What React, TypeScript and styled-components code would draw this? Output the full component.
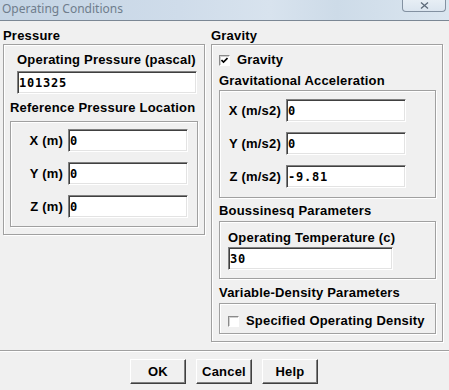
import styled, { createGlobalStyle } from 'styled-components'

const GlobalStyle = createGlobalStyle`
    html, body {
        margin: 0;
        padding: 0;
        background: #f0f0f0;
    }
    * {
        box-sizing: border-box;
    }
`

const Window = styled.div`
    width: 449px;
    height: 390px;
    overflow: hidden;
    display: flex;
    flex-direction: column;
    background: #f0f0f0;
    font-family: 'Liberation Sans', Arial, sans-serif;
    font-size: 13px;
    font-weight: bold;
    letter-spacing: 0.2px;
    color: #000;
`

const TitleBar = styled.div`
    height: 21px;
    flex: none;
    display: flex;
    justify-content: space-between;
    align-items: flex-start;
    padding-left: 2px;
    border-bottom: 1px solid #7b8794;
    background: linear-gradient(
        90deg,
        #c4d4e4 0%,
        #cfdcea 40%,
        #d8e3ee 60%,
        #cddbe8 75%,
        #dbe6f0 100%
    );
`

const Title = styled.span`
    font-family: 'Noto Sans', 'Open Sans', sans-serif;
    font-weight: normal;
    font-size: 12px;
    letter-spacing: 0;
    line-height: 18px;
    color: #6f7d8c;
`

const CloseBox = styled.div`
    width: 44px;
    height: 12px;
    margin-right: 3px;
    display: flex;
    align-items: center;
    justify-content: center;
    border: 1px solid #8391a1;
    border-top: none;
    border-radius: 0 0 4px 4px;
    background: linear-gradient(#e7eef5, #dbe5ef);
`

const Body = styled.div`
    display: flex;
    align-items: flex-start;
    gap: 6px;
    padding-left: 3px;
`

const Column = styled.div<{ $width: number }>`
    width: ${({ $width }) => $width}px;
    display: flex;
    flex-direction: column;
`

const GroupTitle = styled.div`
    line-height: 16px;
    padding-top: 7px;
`

const Frame = styled.div<{ $pad: string }>`
    display: flex;
    flex-direction: column;
    padding: ${({ $pad }) => $pad};
    border: 1px solid #a0a0a0;
    box-shadow: inset 1px 1px 0 #fff, 1px 1px 0 #fff;
`

const SubTitle = styled.div<{ $top: number; $bottom: number }>`
    line-height: 16px;
    margin-top: ${({ $top }) => $top}px;
    margin-bottom: ${({ $bottom }) => $bottom}px;
    white-space: nowrap;
`

const FieldLabel = styled.div<{ $indent: number }>`
    line-height: 16px;
    padding-left: ${({ $indent }) => $indent}px;
    white-space: nowrap;
`

const TextBox = styled.input<{ $width: number; $indent?: number }>`
    width: ${({ $width }) => $width}px;
    height: 23px;
    margin: 0 0 0 ${({ $indent }) => $indent ?? 0}px;
    padding: 1px 2px 0 1px;
    border-style: solid;
    border-width: 1px;
    border-color: #808080 #fff #fff #808080;
    box-shadow: inset 1px 1px 0 #404040, inset -1px -1px 0 #e3e3e3;
    background: #fff;
    font-family: 'DejaVu Sans Mono', 'Liberation Mono', monospace;
    font-weight: bold;
    font-size: 12px;
    letter-spacing: 0.8px;
    color: #000;
    outline: none;
`

const Rows = styled.div`
    display: flex;
    flex-direction: column;
    gap: 10px;
`

const Row = styled.div`
    display: flex;
    align-items: center;
    gap: 5px;
`

const RowLabel = styled.span<{ $width: number }>`
    width: ${({ $width }) => $width}px;
    text-align: right;
    white-space: nowrap;
`

const CheckRow = styled.label<{ $indent: number }>`
    display: flex;
    align-items: center;
    gap: 7px;
    line-height: 16px;
    padding-left: ${({ $indent }) => $indent}px;
`

const CheckBox = styled.span`
    width: 11px;
    height: 11px;
    display: flex;
    align-items: center;
    justify-content: center;
    border-style: solid;
    border-width: 1px;
    border-color: #8a8a8a #fff #fff #8a8a8a;
    box-shadow: inset 1px 1px 0 #d0d0d0;
    background: #fff;
`

const Footer = styled.div`
    margin-top: 8px;
    border-top: 1px solid #a0a0a0;
    border-bottom: 1px solid #fff;
`

const ButtonRow = styled.div`
    display: flex;
    justify-content: center;
    gap: 10px;
    margin-top: 7px;
    padding-right: 1px;
`

const Button = styled.button`
    width: 56px;
    height: 25px;
    padding: 0;
    border-style: solid;
    border-width: 1px;
    border-color: #fff #404040 #404040 #fff;
    box-shadow: inset -1px -1px 0 #808080;
    background: #f0f0f0;
    font-family: 'Liberation Sans', Arial, sans-serif;
    font-weight: bold;
    font-size: 13px;
    letter-spacing: 0.2px;
    color: #000;
`

const Check = ({ checked }: { checked: boolean }) => (
    <CheckBox>
        {checked && (
            <svg width="7" height="7" viewBox="0 0 7 7">
                <path d="M0.5 3 L2.5 5 L6.5 1" stroke="#000" strokeWidth="1.6" fill="none" />
            </svg>
        )}
    </CheckBox>
)

const pressureRows = ['X (m)', 'Y (m)', 'Z (m)']
const gravityRows = [
    { label: 'X (m/s2)', value: '0' },
    { label: 'Y (m/s2)', value: '0' },
    { label: 'Z (m/s2)', value: '-9.81' },
]

const App = () => {
    return (
        <Window>
            <GlobalStyle />
            <TitleBar>
                <Title>Operating Conditions</Title>
                <CloseBox>
                    <svg width="9" height="7" viewBox="0 0 9 7">
                        <path d="M1 0.5 L8 6.5 M8 0.5 L1 6.5" stroke="#5d6a79" strokeWidth="1.3" fill="none" />
                    </svg>
                </CloseBox>
            </TitleBar>
            <Body>
                <Column $width={202}>
                    <GroupTitle>Pressure</GroupTitle>
                    <Frame $pad="7px 6px 7px 6px">
                        <FieldLabel $indent={7}>Operating Pressure (pascal)</FieldLabel>
                        <TextBox $width={180} $indent={7} style={{ marginTop: 3 }} defaultValue="101325" />
                        <SubTitle $top={6} $bottom={5}>Reference Pressure Location</SubTitle>
                        <Frame $pad="7px 0 8px 1px">
                            <Rows>
                                {pressureRows.map((l) => (
                                    <Row key={l}>
                                        <RowLabel $width={51}>{l}</RowLabel>
                                        <TextBox $width={120} defaultValue="0" />
                                    </Row>
                                ))}
                            </Rows>
                        </Frame>
                    </Frame>
                </Column>
                <Column $width={232}>
                    <GroupTitle>Gravity</GroupTitle>
                    <Frame $pad="7px 6px 7px 7px">
                        <CheckRow $indent={0}>
                            <Check checked />
                            Gravity
                        </CheckRow>
                        <SubTitle $top={5} $bottom={1}>Gravitational Acceleration</SubTitle>
                        <Frame $pad="8px 0 9px 1px">
                            <Rows>
                                {gravityRows.map((r) => (
                                    <Row key={r.label}>
                                        <RowLabel $width={60}>{r.label}</RowLabel>
                                        <TextBox $width={120} defaultValue={r.value} />
                                    </Row>
                                ))}
                            </Rows>
                        </Frame>
                        <SubTitle $top={5} $bottom={2}>Boussinesq Parameters</SubTitle>
                        <Frame $pad="8px 0 8px 8px">
                            <FieldLabel $indent={0}>Operating Temperature (c)</FieldLabel>
                            <TextBox $width={165} style={{ marginTop: 1 }} defaultValue="30" />
                        </Frame>
                        <SubTitle $top={6} $bottom={2}>Variable-Density Parameters</SubTitle>
                        <Frame $pad="9px 0 4px 8px">
                            <CheckRow $indent={0}>
                                <Check checked={false} />
                                Specified Operating Density
                            </CheckRow>
                        </Frame>
                    </Frame>
                </Column>
            </Body>
            <Footer />
            <ButtonRow>
                <Button>OK</Button>
                <Button>Cancel</Button>
                <Button>Help</Button>
            </ButtonRow>
        </Window>
    )
}

export default App
